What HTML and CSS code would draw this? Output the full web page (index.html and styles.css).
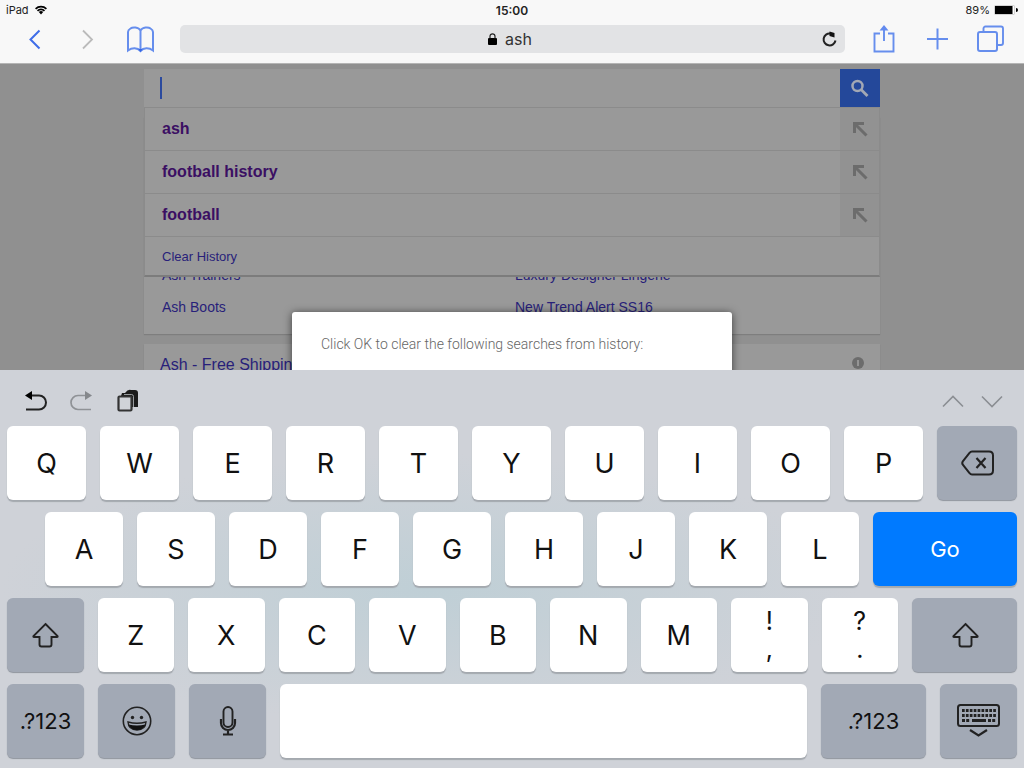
FILE: index.html
```
<!DOCTYPE html>
<html lang="en">
<head>
    <meta charset="UTF-8">
    <meta name="viewport" content="width=device-width, initial-scale=1.0">
    <title>ash</title>
    <link rel="stylesheet" href="styles.css">
</head>
<body>
    <header class="browser">
        <div class="status-bar">
            <div class="status-left">
                <span>iPad</span>
                <svg width="12" height="10" viewBox="0 0 12 10"><path d="M0 3.2A8.6 8.6 0 0 1 12 3.2L10.8 4.5A7 7 0 0 0 1.2 4.5Z"/><path d="M1.9 5.2A6 6 0 0 1 10.1 5.2L8.9 6.4A4.4 4.4 0 0 0 3.1 6.4Z"/><path d="M3.8 7.1A3.3 3.3 0 0 1 8.2 7.1L6 9.6Z"/></svg>
            </div>
            <div class="status-time">15:00</div>
            <div class="status-right">
                <span>89%</span>
                <svg width="24" height="10" viewBox="0 0 24 10"><rect x="0.5" y="0.5" width="20" height="9" rx="1" fill="#fff" stroke="#aaa" stroke-width="0.5"/><rect x="1" y="1" width="17.5" height="8"/><path d="M22 3A2 2 0 0 1 22 7Z"/></svg>
            </div>
        </div>
        <nav class="toolbar">
            <button class="tool" aria-label="Back"><svg width="28" height="28" viewBox="0 0 28 28"><path d="M18.5 5.5L9.5 14.5L18.5 23.5" stroke-width="2"/></svg></button>
            <button class="tool tool-off" aria-label="Forward"><svg width="28" height="28" viewBox="0 0 28 28"><path d="M9 5.5L18 14.5L9 23.5" stroke-width="1.8"/></svg></button>
            <button class="tool tool-light" aria-label="Bookmarks"><svg width="28" height="28" viewBox="0 0 28 28"><path d="M13.5 5.5C11.5 1.8 5.5 1.8 3.5 3.5Q1 5 1 7V25.5C5 22.5 10.5 22.5 13.5 26C16.5 22.5 22 22.5 26 25.5V7Q26 5 23.5 3.5C21.5 1.8 15.5 1.8 13.5 5.5V25.5" stroke-width="2"/><path d="M11.3 24H15.7L13.5 27Z" fill="#3465e6" stroke="none"/></svg></button>
            <div class="address">
                <svg width="9" height="12" viewBox="0 0 9 12"><rect y="5" width="9" height="7" rx="1"/><path d="M2 5.5V3.3A2.5 2.5 0 0 1 7 3.3V5.5" fill="none" stroke="#222" stroke-width="1.2"/></svg>
                <input class="address-input" type="text" value="ash" aria-label="Address">
                <button class="reload" aria-label="Reload"><svg width="18" height="18" viewBox="0 0 18 18"><path d="M9.5 3.5A6 6 0 1 0 14.500 10.500" fill="none" stroke="#222" stroke-width="2"/><path d="M8.5 1.500L13.5 3V7.500L8.5 6Z" fill="#111"/></svg></button>
            </div>
            <button class="tool tool-light" aria-label="Share"><svg width="28" height="30" viewBox="0 0 28 30"><path d="M10 9.5H4.500V27.5H23.500V9.5H18M14 17V3.5" stroke-width="1.9"/><path d="M9.500 6.5L14 1L18.5 6.5Z" fill="#628aef" stroke="none"/></svg></button>
            <button class="tool tool-light" aria-label="New tab"><svg width="28" height="28" viewBox="0 0 28 28"><path d="M14.500 3.5V24.5M4 14H25" stroke-width="2"/></svg></button>
            <button class="tool tool-light" aria-label="Tabs"><svg width="28" height="28" viewBox="0 0 28 28"><rect x="2" y="7" width="19" height="19" rx="2" stroke-width="2"/><path d="M7.5 6V3.5A2 2 0 0 1 9.5 1.5H25A2 2 0 0 1 27 3.5V18A2 2 0 0 1 25 20H22" stroke-width="1.9"/></svg></button>
        </nav>
    </header>

    <main class="page">
        <form class="search">
            <div class="search-box">
                <span class="caret"></span>
                <input class="search-input" type="text" aria-label="Search">
            </div>
            <button class="search-button" type="button" aria-label="Search"><svg width="20" height="20" viewBox="0 0 20 20" fill="none" stroke="#a3a8b4"><circle cx="7.5" cy="8" r="5" stroke-width="2.5"/><path d="M11.3 11.8L17.500 18" stroke-width="2.8"/></svg></button>
            <ul class="suggestions">
                <li class="suggestion">
                    <a href="#">ash</a>
                    <button class="fill" type="button" aria-label="Use ash"><svg width="16" height="16" viewBox="0 0 16 16"><path d="M2.5 12V2.5H12M2.5 2.5L14.5 14.5"/></svg></button>
                </li>
                <li class="suggestion">
                    <a href="#">football history</a>
                    <button class="fill" type="button" aria-label="Use football history"><svg width="16" height="16" viewBox="0 0 16 16"><path d="M2.5 12V2.5H12M2.5 2.5L14.5 14.5"/></svg></button>
                </li>
                <li class="suggestion">
                    <a href="#">football</a>
                    <button class="fill" type="button" aria-label="Use football"><svg width="16" height="16" viewBox="0 0 16 16"><path d="M2.5 12V2.5H12M2.5 2.5L14.5 14.5"/></svg></button>
                </li>
                <li class="clear"><a href="#">Clear History</a></li>
            </ul>
        </form>

        <section class="card links">
            <a href="#">Ash Trainers</a>
            <a href="#">Luxury Designer Lingerie</a>
            <a href="#">Ash Boots</a>
            <a href="#">New Trend Alert SS16</a>
        </section>
        <section class="card result">
            <a href="#">Ash - Free Shipping</a>
            <svg width="12" height="12" viewBox="0 0 12 12"><circle cx="6" cy="6" r="6" fill="#6c6c6c"/><path d="M6 3V9" stroke="#949494" stroke-width="2"/></svg>
        </section>

        <div class="overlay">
            <div class="dialog" role="dialog">Click OK to clear the following searches from history:</div>
        </div>
    </main>

    <section class="keyboard">
        <div class="shortcuts">
            <button aria-label="Undo"><svg width="24" height="24" viewBox="0 0 24 24"><path d="M5 6.5H15A6.8 6.8 0 0 1 15 20.5H2" fill="none" stroke="#222" stroke-width="2"/><path d="M1 6.5L8 2V11Z"/></svg></button>
            <button aria-label="Redo"><svg width="24" height="24" viewBox="0 0 24 24"><path d="M18 6.5H8A6.8 6.8 0 0 0 8 20.5H21" fill="none" stroke="#8f9296" stroke-width="1.7"/><path d="M22 6.5L15 2V11Z" fill="#85888c"/></svg></button>
            <button aria-label="Paste"><svg width="24" height="24" viewBox="0 0 24 24"><path d="M5 7L6 4H9Q12 0 15 1H19Q22 1 22 4V18H16V7Z" fill="#1b1b1b"/><path d="M8 5.500H15.500Q17.500 5.500 17.500 7.500V18" fill="none" stroke="#b9bcc0" stroke-width="0.8"/><rect x="2.5" y="7.5" width="13" height="14" rx="1" fill="#d0d3d8" stroke="#333" stroke-width="2.2"/></svg></button>
            <span class="spacer"></span>
            <button aria-label="Previous field"><svg width="24" height="24" viewBox="0 0 24 24"><path d="M2 17.5L12 7.5L22 17.5" fill="none" stroke="#8b8e93" stroke-width="1.6"/></svg></button>
            <button aria-label="Next field"><svg width="24" height="24" viewBox="0 0 24 24"><path d="M2 7.5L12 17.5L22 7.5" fill="none" stroke="#8b8e93" stroke-width="1.6"/></svg></button>
        </div>
        <div class="row">
            <button class="key">Q</button>
            <button class="key">W</button>
            <button class="key">E</button>
            <button class="key">R</button>
            <button class="key">T</button>
            <button class="key">Y</button>
            <button class="key">U</button>
            <button class="key">I</button>
            <button class="key">O</button>
            <button class="key">P</button>
            <button class="key dark delete" aria-label="Delete"><svg width="34" height="26" viewBox="0 0 34 26"><path d="M12 1.500H29Q33 1.500 33 5.500V20.500Q33 24.500 29 24.500H12Q10.500 24.500 9.500 23L3 15Q1.500 13 3 11L9.500 3Q10.500 1.500 12 1.500Z" stroke-width="2"/><path d="M16.500 8L25.500 18M25.500 8L16.500 18" stroke-width="2.2"/></svg></button>
        </div>
        <div class="row row-home">
            <button class="key">A</button>
            <button class="key">S</button>
            <button class="key">D</button>
            <button class="key">F</button>
            <button class="key">G</button>
            <button class="key">H</button>
            <button class="key">J</button>
            <button class="key">K</button>
            <button class="key">L</button>
            <button class="key go">Go</button>
        </div>
        <div class="row">
            <button class="key dark" aria-label="Shift"><svg width="28" height="26" viewBox="0 0 28 26"><path d="M14.500 2L26.500 14Q27 15 26 15H20.500V22.5Q20.500 24.5 18.500 24.5H10.500Q8.500 24.5 8.500 22.5V15H3Q2 15 2.500 14Z" stroke-width="1.9"/></svg></button>
            <button class="key">Z</button>
            <button class="key">X</button>
            <button class="key">C</button>
            <button class="key">V</button>
            <button class="key">B</button>
            <button class="key">N</button>
            <button class="key">M</button>
            <button class="key double"><span>!</span><span>,</span></button>
            <button class="key double"><span>?</span><span>.</span></button>
            <button class="key dark wide" aria-label="Shift"><svg width="28" height="26" viewBox="0 0 28 26"><path d="M14.500 2L26.500 14Q27 15 26 15H20.500V22.5Q20.500 24.5 18.500 24.5H10.500Q8.500 24.5 8.500 22.5V15H3Q2 15 2.500 14Z" stroke-width="1.9"/></svg></button>
        </div>
        <div class="row">
            <button class="key dark label side">.?123</button>
            <button class="key dark side" aria-label="Emoji"><svg width="30" height="30" viewBox="0 0 30 30"><circle cx="15" cy="15" r="13.7" stroke-width="1.6"/><path d="M6 16Q15 18.5 24 16Q23.5 24 15 24Q6.5 24 6 16Z" stroke-width="1.4"/><path d="M6.5 18.5Q15 20.5 23.5 18.5Q21 24 15 24Q9 24 6.5 18.5Z" fill="#111" stroke="none"/><circle cx="10.5" cy="11.5" r="1.7" fill="#222" stroke="none"/><circle cx="19.5" cy="11.5" r="1.7" fill="#222" stroke="none"/></svg></button>
            <button class="key dark side" aria-label="Dictate"><svg width="18" height="30" viewBox="0 0 18 30"><rect x="4.5" y="1" width="9" height="20" rx="4.5" stroke-width="1.9"/><path d="M2 13V17A7 7 0 0 0 16 17V13M9 24V28.5M4 28.5H14" stroke-width="2.2"/></svg></button>
            <button class="key space" aria-label="Space"></button>
            <button class="key dark label wide">.?123</button>
            <button class="key dark side" aria-label="Hide keyboard"><svg width="44" height="34" viewBox="0 0 44 34"><rect x="1" y="1" width="41" height="21" rx="2.5" stroke-width="2"/><path d="M5 6.5H39M5 11.5H39" stroke-width="3" stroke-dasharray="2.7 1.2"/><path d="M5 16.5H13M31 16.5H39" stroke-width="3" stroke-dasharray="3 1.2"/><path d="M15 16.5H29" stroke-width="3"/><path d="M13 26L21.5 31.5L30 26" stroke-width="2.2"/></svg></button>
        </div>
    </section>
</body>
</html>
```
FILE: styles.css
```
* {
    box-sizing: border-box;
}
body {
    display: flex;
    flex-direction: column;
    height: 100vh;
    margin: 0;
    overflow: hidden;
    font-family: "Liberation Sans", Arial, sans-serif;
}
button, input {
    border: none;
    padding: 0;
    background: none;
    font-family: inherit;
    outline: none;
}
button {
    display: flex;
    align-items: center;
    justify-content: center;
    cursor: pointer;
}
a {
    text-decoration: none;
}
svg {
    flex: none;
}

/* browser bar */
.browser {
    background-color: #f8f8f8;
    border-bottom: 1px solid #b5b5b5;
    font-family: Inter, sans-serif;
}
.status-bar {
    display: grid;
    grid-template-columns: 1fr auto 1fr;
    align-items: center;
    height: 20px;
    padding: 0 6px;
    font-size: 11px;
    color: #222;
}
.status-left, .status-right {
    display: flex;
    align-items: center;
    gap: 6px;
}
.status-right {
    justify-content: flex-end;
    gap: 4px;
}
.status-time {
    font-size: 12px;
    font-weight: 600;
}
.toolbar {
    display: flex;
    align-items: center;
    gap: 25px;
    height: 43px;
    padding: 0 20px 5px 21px;
}
.tool {
    width: 28px;
    height: 38px;
}
.tool svg {
    fill: none;
    stroke: #3f6de8;
}
.tool-light svg {
    stroke: #668eed;
}
.tool-off svg {
    stroke: #bbb;
}
.address {
    display: flex;
    flex: 1;
    align-items: center;
    justify-content: center;
    gap: 8px;
    height: 28px;
    position: relative;
    border-radius: 5px;
    background-color: #e2e3e5;
}
.address-input {
    width: 32px;
    font-size: 16px;
    color: #333;
}
.reload {
    position: absolute;
    right: 6px;
}

/* dimmed page */
.page {
    flex: 1;
    min-height: 0;
    position: relative;
    overflow: hidden;
    padding: 5px 144px 0;
    background-color: #909090;
}
.search {
    display: flex;
    position: relative;
    height: 38px;
    background-color: #999;
}
.search-box {
    display: flex;
    flex: 1;
    align-items: center;
    padding-left: 16px;
}
.caret {
    width: 2px;
    height: 22px;
    background-color: #2b4a9e;
}
.search-input {
    flex: 1;
    font-size: 16px;
}
.search-button {
    width: 40px;
    background-color: #24489a;
}
.suggestions {
    position: absolute;
    top: 100%;
    left: 0;
    right: 0;
    z-index: 1;
    margin: 0;
    padding: 0;
    list-style: none;
    border: 1px solid #8b8b8b;
    border-bottom: 2px solid #7c7c7c;
    background-color: #999;
}
.suggestion {
    display: flex;
    align-items: stretch;
    justify-content: space-between;
    height: 43px;
    border-bottom: 1px solid #8b8b8b;
    line-height: 42px;
    font-size: 16px;
    font-weight: bold;
}
.suggestion a {
    padding-left: 17px;
    color: #3b0f63;
}
.fill {
    width: 39px;
    background-color: #929292;
}
.fill svg {
    fill: none;
    stroke: #6c6c6c;
    stroke-width: 3;
}
.clear {
    height: 38px;
    padding-left: 17px;
    line-height: 40px;
    font-size: 13px;
}
.clear a, .card a {
    color: #281f7a;
}
.card {
    background-color: #999;
    box-shadow: 0 1px 1px #7e7e7e;
}
.links {
    display: grid;
    grid-template-columns: 1fr 1fr;
    column-gap: 6px;
    margin-top: 10px;
    padding: 142px 18px 11px;
    line-height: 32px;
    font-size: 14px;
}
.result {
    display: flex;
    align-items: center;
    justify-content: space-between;
    margin-top: 10px;
    padding: 8px 16px 12px;
    line-height: 26px;
    font-size: 16px;
}
.result svg {
    margin-bottom: 4px;
}
.overlay {
    display: flex;
    align-items: flex-start;
    justify-content: center;
    position: absolute;
    inset: 0;
    z-index: 2;
    padding-top: 248px;
}
.dialog {
    width: 440px;
    padding: 20px 29px 40px;
    border-radius: 3px;
    background-color: #fff;
    box-shadow: 0 1px 8px rgba(0,0,0,0.6);
    line-height: 24px;
    font-family: Roboto, sans-serif;
    font-size: 14px;
    font-weight: 300;
    color: #666;
}

/* keyboard */
.keyboard {
    display: flex;
    flex-direction: column;
    gap: 12px;
    padding: 0 7px 10px;
    background: radial-gradient(ellipse 42% 34% at 42% 55%, #bfcfd6, rgba(191,207,214,0)), #cfd2d8;
    font-family: Inter, sans-serif;
}
.shortcuts {
    display: flex;
    align-items: center;
    gap: 22px;
    height: 44px;
    padding: 18px 13px 0 17px;
}
.shortcuts button:last-child {
    margin-left: -7px;
}
.spacer {
    flex: 1;
}
.row {
    display: flex;
    gap: 14px;
}
.row-home {
    padding-left: 38px;
}
.key {
    flex: 1 1 0;
    height: 74px;
    border-radius: 6px;
    background-color: #fff;
    box-shadow: 0 2px 1px #a4a9af;
    font-size: 27px;
    color: #111;
}
.key svg {
    fill: none;
    stroke: #222;
}
.dark {
    background-color: #a2a9b5;
    box-shadow: 0 1px 1px #8f959e;
}
.delete {
    flex: 0 0 80px;
}
.go {
    flex: 0 0 144px;
    background-color: #007aff;
    font-size: 22px;
    color: #fff;
}
.label {
    font-size: 22px;
}
.side {
    flex: 0 0 77px;
}
.wide {
    flex: 0 0 105px;
}
.double {
    flex-direction: column;
    line-height: 28px;
    font-size: 25px;
}
```
